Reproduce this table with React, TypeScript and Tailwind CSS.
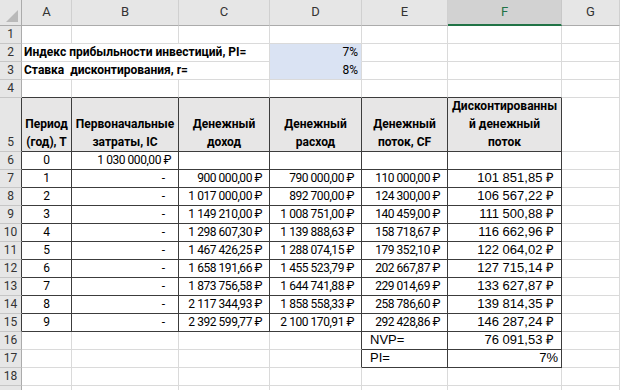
import React from "react";

// Excel-style sheet: NPV / PI calculation table.

const COLS = ["A", "B", "C", "D", "E", "F", "G"];

const calibri = "font-['Roboto','Liberation_Sans',sans-serif]";
const arial = "font-['Liberation_Sans','Arial',sans-serif]";

type CellSpec = {
  text?: string;
  align?: "left" | "center" | "right";
  bold?: boolean;
  font?: "calibri" | "arial";
  fill?: string;
  tight?: boolean;
};

const money = (v: string): CellSpec => ({ text: v + " ₽", align: "right", tight: true });
const disc = (v: string): CellSpec => ({ text: v + " ₽", align: "right", font: "arial" });

const flows: [string, string, string, string, string][] = [
  ["1", "900 000,00", "790 000,00", "110 000,00", "101 851,85"],
  ["2", "1 017 000,00", "892 700,00", "124 300,00", "106 567,22"],
  ["3", "1 149 210,00", "1 008 751,00", "140 459,00", "111 500,88"],
  ["4", "1 298 607,30", "1 139 888,63", "158 718,67", "116 662,96"],
  ["5", "1 467 426,25", "1 288 074,15", "179 352,10", "122 064,02"],
  ["6", "1 658 191,66", "1 455 523,79", "202 667,87", "127 715,14"],
  ["7", "1 873 756,58", "1 644 741,88", "229 014,69", "133 627,87"],
  ["8", "2 117 344,93", "1 858 558,33", "258 786,60", "139 814,35"],
  ["9", "2 392 599,77", "2 100 170,91", "292 428,86", "146 287,24"],
];

function buildSheet(): Record<string, CellSpec> {
  const s: Record<string, CellSpec> = {};
  s["D2"] = { text: "7%", align: "right", fill: "bg-[#dae3f3]" };
  s["D3"] = { text: "8%", align: "right", fill: "bg-[#dae3f3]" };
  const heads = [
    "Период\n(год), Т",
    "Первоначальные\nзатраты, IC",
    "Денежный\nдоход",
    "Денежный\nрасход",
    "Денежный\nпоток, CF",
    "Дисконтированны\nй денежный\nпоток",
  ];
  heads.forEach((h, i) => {
    s[COLS[i] + "5"] = { text: h, align: "center", bold: true, fill: "bg-[#e7e6e6]" };
  });
  s["A6"] = { text: "0", align: "center" };
  s["B6"] = money("1 030 000,00");
  flows.forEach((f, i) => {
    const r = 7 + i;
    s["A" + r] = { text: f[0], align: "center" };
    s["B" + r] = { text: "-  ", align: "right" };
    s["C" + r] = money(f[1]);
    s["D" + r] = money(f[2]);
    s["E" + r] = money(f[3]);
    s["F" + r] = disc(f[4]);
  });
  s["E16"] = { text: "NVP=", align: "left", font: "arial" };
  s["F16"] = disc("76 091,53");
  s["E17"] = { text: "PI=", align: "left", font: "arial" };
  s["F17"] = { text: "7%", align: "right", font: "arial" };
  return s;
}

const sheet = buildSheet();

function inTable(r: number, c: number) {
  if (c < 0 || c > 6) return false;
  if (r >= 5 && r <= 15 && c <= 5) return true;
  if ((r === 16 || r === 17) && (c === 4 || c === 5)) return true;
  return false;
}

function Cell({ r, c }: { r: number; c: number }) {
  const key = COLS[c] + r;
  const spec = sheet[key] ?? {};
  const darkRight = inTable(r, c) || inTable(r, c + 1);
  const darkBottom = inTable(r, c) || inTable(r + 1, c);
  const right = darkRight ? "border-r-[#3c3c3c]" : "border-r-[#dadada]";
  let bottom = darkBottom ? "border-b-[#3c3c3c]" : "border-b-[#dadada]";
  if (key === "D2") bottom = "border-b-[#dae3f3]";
  const justify =
    spec.align === "right"
      ? "justify-end text-right"
      : spec.align === "center"
        ? "justify-center text-center"
        : "justify-start text-left";
  const pad =
    spec.align === "right"
      ? spec.text?.endsWith("%")
        ? "pr-[3px]"
        : "pr-[7px]"
      : spec.align === "left"
        ? "pl-[8px]"
        : "px-[1px]";
  const font = spec.font === "arial" ? `${arial} text-[13px]` : `${calibri} text-[12px]`;
  return (
    <div
      className={`flex items-end border-r border-b ${right} ${bottom} ${justify} ${pad} ${spec.fill ?? ""} ${
        spec.bold ? "font-bold" : ""
      } ${spec.tight ? "tracking-[-0.45px]" : ""} ${font} leading-[18px] text-black whitespace-pre overflow-hidden`}
    >
      {spec.text ?? ""}
    </div>
  );
}

function RowHead({ r }: { r: number }) {
  const dark = inTable(r, 0);
  return (
    <div
      className={`flex items-end justify-center border-b border-r border-b-[#c6c6c6] ${
        dark ? "border-r-[#3c3c3c]" : "border-r-[#ababab]"
      } bg-[#e6e6e6] ${calibri} text-[12px] leading-[18px] text-[#333]`}
    >
      {r < 19 ? r : ""}
    </div>
  );
}

export default function App() {
  const rows = Array.from({ length: 19 }, (_, i) => i + 1);
  return (
    <div className="h-[390px] w-[620px] overflow-hidden bg-white">
      <div className="grid grid-cols-[22px_50px_107px_91px_92px_86px_114px_58px] grid-rows-[26px_repeat(4,18px)_54px_repeat(14,18px)]">
        {/* corner */}
        <div className="relative border-b border-r border-[#ababab] bg-[#e6e6e6]">
          <div className="absolute bottom-[3px] right-[3px] h-0 w-0 border-l-[12px] border-b-[12px] border-l-transparent border-b-[#b9b9b9]" />
        </div>
        {COLS.map((c) =>
          c === "F" ? (
            <div
              key={c}
              className={`flex items-end justify-center border-r border-r-[#c8c8c8] border-b-2 border-b-[#217346] bg-[#d2d2d2] pb-[3px] ${calibri} text-[13px] text-[#217346]`}
            >
              {c}
            </div>
          ) : (
            <div
              key={c}
              className={`flex items-end justify-center border-r border-b border-r-[#d0d0d0] border-b-[#ababab] bg-[#e6e6e6] pb-[4px] ${calibri} text-[13px] text-[#333]`}
            >
              {c}
            </div>
          ),
        )}

        {rows.map((r) => (
          <React.Fragment key={r}>
            <RowHead r={r} />
            {r === 2 || r === 3 ? (
              <>
                <div
                  className={`col-span-3 flex items-end border-r border-b border-r-[#dadada] border-b-[#dadada] pl-[2px] ${calibri} text-[12px] font-bold leading-[18px] whitespace-pre text-black`}
                >
                  {r === 2 ? "Индекс прибыльности инвестиций, PI=" : "Ставка  дисконтирования, r="}
                </div>
                {[3, 4, 5, 6].map((c) => (
                  <Cell key={c} r={r} c={c} />
                ))}
              </>
            ) : (
              COLS.map((_, c) => <Cell key={c} r={r} c={c} />)
            )}
          </React.Fragment>
        ))}
      </div>
    </div>
  );
}
